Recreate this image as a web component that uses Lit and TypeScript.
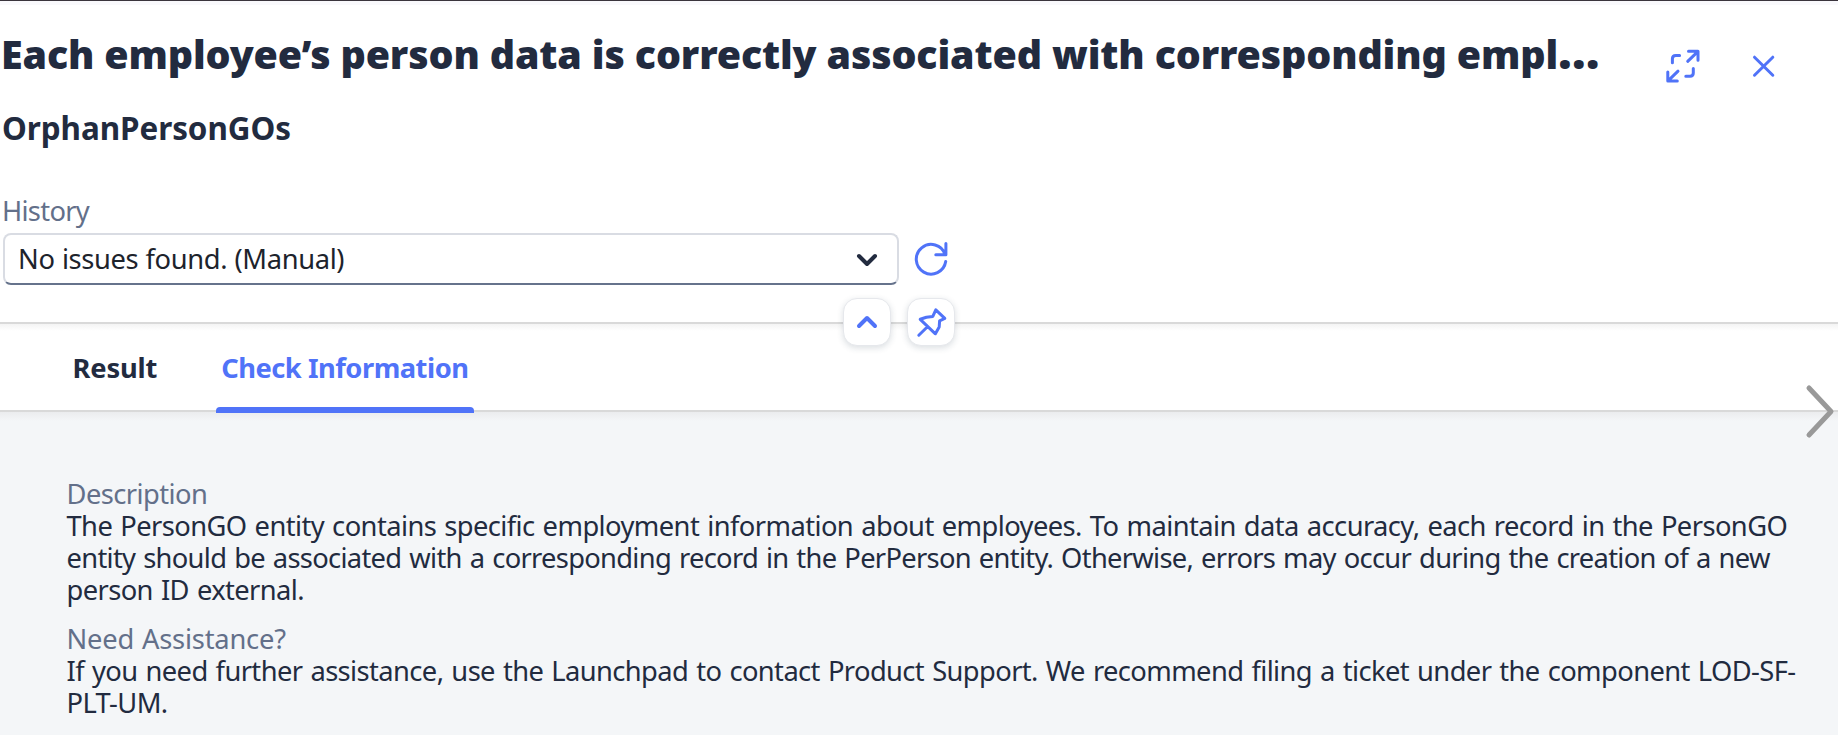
import { LitElement, html, css } from "lit";
import { customElement, property, state } from "lit/decorators.js";
import { classMap } from "lit/directives/class-map.js";

@customElement("info-block")
export class InfoBlock extends LitElement {
  @property() label = "";

  static styles = css`
    :host { display: block; }
    .label { color: #63708a; letter-spacing: -0.55px; }
    .spaced { letter-spacing: -0.2px; word-spacing: 1px; }
    .text { color: #222b3f; letter-spacing: -0.59px; word-spacing: 1.5px; }
  `;

  render() {
    return html`<div class=${classMap({ label: true, spaced: this.label.includes(" ") })}>${this.label}</div>
      <div class="text"><slot></slot></div>`;
  }
}

@customElement("app-root")
export class AppRoot extends LitElement {
  @state() private tab = "Check Information";

  static styles = css`
    :host {
      display: flex;
      flex-direction: column;
      position: relative;
      height: 735px;
      box-sizing: border-box;
      overflow: hidden;
      background: #f4f6f8;
      border-top: 1px solid #3a343c;
      font-family: "Noto Sans", sans-serif;
      font-size: 27.3px;
      line-height: 32.3px;
      color: #222b3f;
    }
    * { box-sizing: border-box; }
    svg { display: block; fill: none; stroke: #5073f8; stroke-width: 3; stroke-linecap: round; stroke-linejoin: round; }
    button { padding: 0; margin: 0; border: 0; background: none; font: inherit; color: inherit; }
    .header {
      height: 323px;
      flex: none;
      background: #fff;
      border-top: 4px solid #f9f9fc;
      border-bottom: 2px solid #d9d9d9;
    }
    .top { display: flex; height: 87px; }
    h1 {
      margin: 21px 0 0 1px;
      width: 1602px;
      font-size: 39.4px;
      line-height: 56px;
      height: 56px;
      font-weight: 900;
      letter-spacing: -0.14px;
      white-space: nowrap;
    }
    .dots { font-size: 48px; line-height: 0; }
    .actions { display: flex; align-items: flex-start; gap: 40px; padding: 35px 0 0 57px; height: 87px; }
    h2 { margin: 16px 0 0 2px; font-size: 31.4px; line-height: 40px; font-weight: 700; letter-spacing: -0.05px; }
    .label { margin: 47px 0 0 2px; color: #63708a; letter-spacing: -0.7px; }
    .history { display: flex; align-items: center; gap: 14px; margin: 6px 0 0 3px; }
    .select {
      display: flex;
      align-items: center;
      justify-content: space-between;
      width: 896px;
      height: 52px;
      padding: 0 18px 0 13px;
      border: 2px solid #d9dce3;
      border-bottom-color: #66738c;
      border-radius: 8px;
      letter-spacing: -0.36px;
      word-spacing: 0.6px;
      color: #1d232c;
    }
    .select svg { stroke: #222b3f; stroke-width: 4; margin-top: 2px; }
    .tabs {
      display: flex;
      flex: none;
      height: 88px;
      padding: 0 67.5px;
      gap: 53px;
      background: linear-gradient(#f4f4f4, #fff 7px);
      border-bottom: 2px solid #d9d9d9;
    }
    .tab {
      position: relative;
      display: flex;
      height: 88px;
      padding: 28px 6px 0 5px;
      line-height: 32px;
      font-weight: 700;
      letter-spacing: -0.16px;
    }
    .wide { letter-spacing: -0.49px; }
    .active { color: #5073f8; }
    .active::after {
      content: "";
      position: absolute;
      left: 0;
      right: 0;
      bottom: -1px;
      height: 6px;
      background: #5073f8;
      border-radius: 4px 4px 0 0;
    }
    .body {
      flex: 1;
      display: flex;
      flex-direction: column;
      gap: 16px;
      padding: 65.5px 40px 0 66.5px;
      background: linear-gradient(#ebecee, #f4f6f8 9px);
    }
    .loose { letter-spacing: -0.57px; }
    .tight { letter-spacing: -0.69px; }
    .float {
      position: absolute;
      top: 297px;
      left: 843px;
      display: flex;
      gap: 16px;
    }
    .pill {
      width: 48px;
      height: 48px;
      border: 1px solid #e6e8ec;
      border-radius: 14px;
      background: #fff;
      box-shadow: 0 2px 6px rgba(34, 53, 72, 0.16);
      display: grid;
      place-items: center;
    }
    .bold { stroke-width: 4; }
    .next { position: absolute; right: 2px; top: 382px; }
    .next svg { stroke: #999; stroke-width: 5; }
  `;

  private renderTab(name: string) {
    return html`<button
      class=${classMap({ tab: true, wide: name.length > 8, active: this.tab === name })}
      @click=${() => (this.tab = name)}
    >${name}</button>`;
  }

  render() {
    return html`
      <div class="header">
        <div class="top">
          <h1>Each employee’s person data is correctly associated with corresponding empl<span class="dots">…</span></h1>
          <div class="actions">
            <button aria-label="Full screen">
              <svg width="50" height="50" viewBox="1660 40 50 50">
                <path d="M1688.5 51.3H1698V60.3M1687.7 61.3L1697.5 51.8M1667.8 72V81.1H1677.3M1678 71.2L1668.3 80.6M1672.4 62.8V58.8Q1672.4 55.4 1675.8 55.4H1679.6M1693.3 68.6V73Q1693.3 76.3 1690 76.3H1685.8" />
              </svg>
            </button>
            <button aria-label="Close">
              <svg width="30" height="50" viewBox="1750 40 30 50">
                <path d="M1754.5 57.2L1772.8 75.2M1772.8 57.2L1754.5 75.2" />
              </svg>
            </button>
          </div>
        </div>
        <h2>OrphanPersonGOs</h2>
        <div class="label">History</div>
        <div class="history">
          <div class="select">
            <span>No issues found. (Manual)</span>
            <svg width="24" height="18" viewBox="0 0 24 18"><path d="M4 5L12 13L20 5" /></svg>
          </div>
          <button aria-label="Refresh">
            <svg width="36" height="36" viewBox="913.5 241.5 36 36">
              <path d="M946.2 262A14.8 14.8 0 1 1 945.6 255M946.4 244V255.3H936.3" />
            </svg>
          </button>
        </div>
      </div>
      <div class="tabs">${this.renderTab("Result")}${this.renderTab("Check Information")}</div>
      <div class="body">
        <info-block label="Description"><span class="loose">The PersonGO entity contains specific employment information about employees. To maintain data accuracy, each record in the PersonGO</span> <span class="tight">entity should be associated with a corresponding record in the PerPerson entity. Otherwise, errors may occur during the creation of a new</span> person ID external.</info-block>
        <info-block label="Need Assistance?">If you need further assistance, use the Launchpad to contact Product Support. We recommend filing a ticket under the component LOD-SF-PLT-UM.</info-block>
      </div>
      <div class="float">
        <button class="pill" aria-label="Collapse header">
          <svg class="bold" width="24" height="18" viewBox="0 0 24 18"><path d="M4 13L12 5L20 13" /></svg>
        </button>
        <button class="pill" aria-label="Pin header">
          <svg width="46" height="46" viewBox="908 299 46 46">
            <path d="M918.8 335.2L927.2 327M935.8 309.8L944.8 318.4L939.6 320.8L939.2 327L935.4 333.8L920.2 319.3L926.4 317.3L932.8 316.4Z" />
          </svg>
        </button>
      </div>
      <div class="next">
        <svg width="32" height="58" viewBox="0 0 32 58"><path d="M5 5L27 28.5L5 52" /></svg>
      </div>
    `;
  }
}
